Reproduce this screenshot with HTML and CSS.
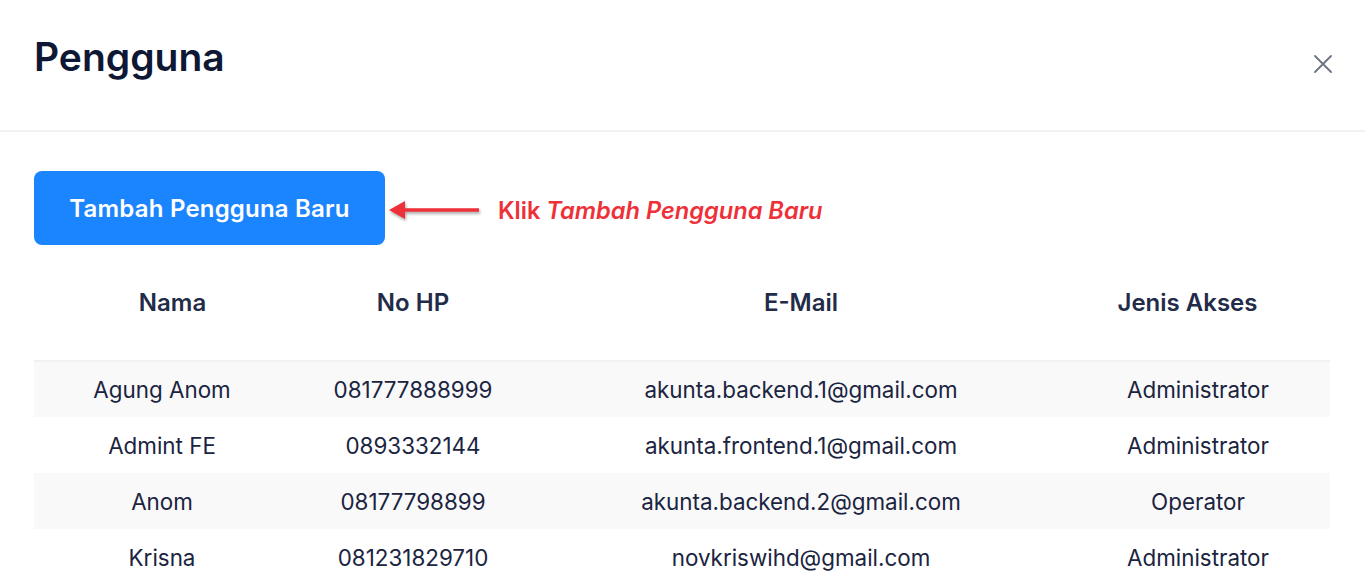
FILE: index.html
```html
<!DOCTYPE html>
<html lang="id">
<head>
<meta charset="utf-8">
<title>Pengguna</title>
<link rel="stylesheet" href="styles.css">
</head>
<body>
<div class="modal">
  <header class="modal-header">
    <h1 class="modal-title">Pengguna</h1>
    <button class="close-btn" aria-label="Tutup">
      <svg width="20" height="20" viewBox="0 0 20 20" fill="none" stroke="#6b7280" stroke-width="1.8" stroke-linecap="round"><path d="M2 2 L18 18 M18 2 L2 18"/></svg>
    </button>
  </header>
  <section class="modal-body">
    <div class="action-row">
      <button class="btn-primary">Tambah Pengguna Baru</button>
      <div class="annotation">
        <svg class="arrow" width="92" height="24" viewBox="0 0 92 24">
          <path d="M14 12 H90" stroke="#ee3039" stroke-width="3.5"/>
          <path d="M0 12 L16 3 L16 21 Z" fill="#ee3039"/>
        </svg>
        <span class="note">Klik <em>Tambah Pengguna Baru</em></span>
      </div>
    </div>
    <table class="users">
      <thead>
        <tr><th class="c1">Nama</th><th class="c2">No HP</th><th class="c3">E-Mail</th><th class="c4">Jenis Akses</th></tr>
      </thead>
      <tbody>
        <tr><td>Agung Anom</td><td>081777888999</td><td>akunta.backend.1@gmail.com</td><td>Administrator</td></tr>
        <tr><td>Admint FE</td><td>0893332144</td><td>akunta.frontend.1@gmail.com</td><td>Administrator</td></tr>
        <tr><td>Anom</td><td>08177798899</td><td>akunta.backend.2@gmail.com</td><td>Operator</td></tr>
        <tr><td>Krisna</td><td>081231829710</td><td>novkriswihd@gmail.com</td><td>Administrator</td></tr>
      </tbody>
    </table>
  </section>
</div>
</body>
</html>
```
FILE: styles.css
```css
* { box-sizing: border-box; }
html, body { margin: 0; padding: 0; background: #ffffff; }
body {
  font-family: Inter, "Noto Sans", "Liberation Sans", sans-serif;
  color: #1b2440;
  overflow: hidden;
}
.modal { width: 1365px; }
.modal-header {
  height: 132px;
  border-bottom: 2px solid #f0f1f3;
  display: flex;
  align-items: flex-start;
  justify-content: space-between;
  padding: 33px 32px 0 34px;
}
.modal-title {
  margin: 0;
  font-size: 39px;
  font-weight: 600;
  color: #0e1733;
  line-height: 48px;
  letter-spacing: 0;
}
.close-btn {
  background: none;
  border: 0;
  padding: 0;
  margin-top: 21px;
  width: 20px;
  height: 20px;
  cursor: pointer;
}
.modal-body { padding: 39px 35px 0 34px; }
.action-row { display: flex; align-items: center; }
.btn-primary {
  width: 351px;
  height: 74px;
  background: #1b84ff;
  color: #ffffff;
  border: 0;
  border-radius: 8px;
  font-family: inherit;
  font-size: 24px;
  font-weight: 600;
  letter-spacing: 0.2px;
  padding-top: 2px;
}
.annotation { display: flex; align-items: center; margin-left: 4px; padding-top: 4px; }
.arrow { filter: drop-shadow(1px 2px 1.5px rgba(0,0,0,0.35)); }
.note {
  margin-left: 17px;
  color: #ee3039;
  font-size: 23.6px;
  font-weight: 600;
  letter-spacing: 0;
}
.note em { font-style: italic; }
.users {
  margin-top: 25px;
  width: 1296px;
  border-collapse: collapse;
  table-layout: fixed;
}
.users th {
  height: 91px;
  vertical-align: top;
  padding-top: 18px;
  font-size: 24px;
  font-weight: 600;
  color: #222b48;
  border-bottom: 2px solid #f0f1f3;
}
.users th.c1 { width: 256px; padding-left: 22px; }
.users th.c2 { width: 246px; }
.users th.c3 { width: 530px; }
.users th.c4 { padding-right: 22px; }
.users td {
  height: 56px;
  text-align: center;
  font-size: 22.4px;
  font-weight: 400;
  color: #1b2440;
  padding: 0;
}
.users tbody tr:nth-child(odd) td { background: #f9f9fa; }
```
